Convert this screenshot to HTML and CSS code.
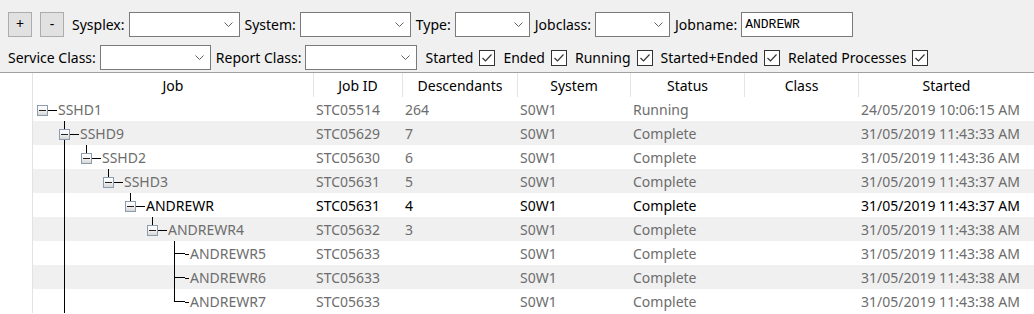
FILE: index.html
```html
<!DOCTYPE html>
<html>
<head>
<meta charset="utf-8">
<link rel="stylesheet" href="styles.css">
</head>
<body>
<div class="toolbar">
  <div class="tb-row">
    <button class="btn">+</button>
    <button class="btn">-</button>
    <span class="lbl first">Sysplex:</span>
    <div class="combo w111"><svg class="chev" width="9" height="5" viewBox="0 0 9 5"><polyline points="0.5,0.5 4.5,4.5 8.5,0.5" fill="none" stroke="#606060" stroke-width="1"/></svg></div>
    <span class="lbl">System:</span>
    <div class="combo w111"><svg class="chev" width="9" height="5" viewBox="0 0 9 5"><polyline points="0.5,0.5 4.5,4.5 8.5,0.5" fill="none" stroke="#606060" stroke-width="1"/></svg></div>
    <span class="lbl">Type:</span>
    <div class="combo w75"><svg class="chev" width="9" height="5" viewBox="0 0 9 5"><polyline points="0.5,0.5 4.5,4.5 8.5,0.5" fill="none" stroke="#606060" stroke-width="1"/></svg></div>
    <span class="lbl">Jobclass:</span>
    <div class="combo w75"><svg class="chev" width="9" height="5" viewBox="0 0 9 5"><polyline points="0.5,0.5 4.5,4.5 8.5,0.5" fill="none" stroke="#606060" stroke-width="1"/></svg></div>
    <span class="lbl">Jobname:</span>
    <div class="textbox">ANDREWR</div>
  </div>
  <div class="tb-row">
    <span class="lbl lead">Service Class:</span>
    <div class="combo w111"><svg class="chev" width="9" height="5" viewBox="0 0 9 5"><polyline points="0.5,0.5 4.5,4.5 8.5,0.5" fill="none" stroke="#606060" stroke-width="1"/></svg></div>
    <span class="lbl">Report Class:</span>
    <div class="combo w112"><svg class="chev" width="9" height="5" viewBox="0 0 9 5"><polyline points="0.5,0.5 4.5,4.5 8.5,0.5" fill="none" stroke="#606060" stroke-width="1"/></svg></div>
    <span class="lbl chk-lbl">Started</span>
    <span class="cb"><svg width="14" height="14" viewBox="0 0 14 14"><polyline points="2.5,7 5.5,10 11.5,3.5" fill="none" stroke="#333" stroke-width="1.2"/></svg></span>
    <span class="lbl chk-lbl">Ended</span>
    <span class="cb"><svg width="14" height="14" viewBox="0 0 14 14"><polyline points="2.5,7 5.5,10 11.5,3.5" fill="none" stroke="#333" stroke-width="1.2"/></svg></span>
    <span class="lbl chk-lbl">Running</span>
    <span class="cb"><svg width="14" height="14" viewBox="0 0 14 14"><polyline points="2.5,7 5.5,10 11.5,3.5" fill="none" stroke="#333" stroke-width="1.2"/></svg></span>
    <span class="lbl chk-lbl">Started+Ended</span>
    <span class="cb"><svg width="14" height="14" viewBox="0 0 14 14"><polyline points="2.5,7 5.5,10 11.5,3.5" fill="none" stroke="#333" stroke-width="1.2"/></svg></span>
    <span class="lbl chk-lbl">Related Processes</span>
    <span class="cb"><svg width="14" height="14" viewBox="0 0 14 14"><polyline points="2.5,7 5.5,10 11.5,3.5" fill="none" stroke="#333" stroke-width="1.2"/></svg></span>
  </div>
</div>

<div class="grid">
  <div class="row head">
    <div class="gutter"></div>
    <div class="hc first-hc">Job</div>
    <div class="hc">Job ID</div>
    <div class="hc">Descendants</div>
    <div class="hc">System</div>
    <div class="hc">Status</div>
    <div class="hc">Class</div>
    <div class="hc">Started</div>
  </div>

  <div class="row">
    <div class="gutter"></div>
    <div class="tree"><span class="col h"><span class="exp"><span class="minus"></span></span></span><span class="stem"></span><span class="name">SSHD1</span></div>
    <div class="c">STC05514</div><div class="c">264</div><div class="c">S0W1</div><div class="c">Running</div><div class="c"></div><div class="c">24/05/2019 10:06:15 AM</div>
  </div>

  <div class="row alt">
    <div class="gutter"></div>
    <div class="tree"><span class="col"></span><span class="col v h"><span class="exp"><span class="minus"></span></span></span><span class="stem"></span><span class="name">SSHD9</span></div>
    <div class="c">STC05629</div><div class="c">7</div><div class="c">S0W1</div><div class="c">Complete</div><div class="c"></div><div class="c">31/05/2019 11:43:33 AM</div>
  </div>

  <div class="row">
    <div class="gutter"></div>
    <div class="tree"><span class="col"></span><span class="col v"></span><span class="col up h"><span class="exp"><span class="minus"></span></span></span><span class="stem"></span><span class="name">SSHD2</span></div>
    <div class="c">STC05630</div><div class="c">6</div><div class="c">S0W1</div><div class="c">Complete</div><div class="c"></div><div class="c">31/05/2019 11:43:36 AM</div>
  </div>

  <div class="row alt">
    <div class="gutter"></div>
    <div class="tree"><span class="col"></span><span class="col v"></span><span class="col"></span><span class="col up h"><span class="exp"><span class="minus"></span></span></span><span class="stem"></span><span class="name">SSHD3</span></div>
    <div class="c">STC05631</div><div class="c">5</div><div class="c">S0W1</div><div class="c">Complete</div><div class="c"></div><div class="c">31/05/2019 11:43:37 AM</div>
  </div>

  <div class="row sel">
    <div class="gutter"></div>
    <div class="tree"><span class="col"></span><span class="col v"></span><span class="col"></span><span class="col"></span><span class="col up h"><span class="exp"><span class="minus"></span></span></span><span class="stem"></span><span class="name">ANDREWR</span></div>
    <div class="c">STC05631</div><div class="c">4</div><div class="c">S0W1</div><div class="c">Complete</div><div class="c"></div><div class="c">31/05/2019 11:43:37 AM</div>
  </div>

  <div class="row alt">
    <div class="gutter"></div>
    <div class="tree"><span class="col"></span><span class="col v"></span><span class="col"></span><span class="col"></span><span class="col"></span><span class="col up h"><span class="exp"><span class="minus"></span></span></span><span class="stem"></span><span class="name">ANDREWR4</span></div>
    <div class="c">STC05632</div><div class="c">3</div><div class="c">S0W1</div><div class="c">Complete</div><div class="c"></div><div class="c">31/05/2019 11:43:38 AM</div>
  </div>

  <div class="row">
    <div class="gutter"></div>
    <div class="tree"><span class="col"></span><span class="col v"></span><span class="col"></span><span class="col"></span><span class="col"></span><span class="col"></span><span class="col v hl"></span><span class="stem"></span><span class="name">ANDREWR5</span></div>
    <div class="c">STC05633</div><div class="c"></div><div class="c">S0W1</div><div class="c">Complete</div><div class="c"></div><div class="c">31/05/2019 11:43:38 AM</div>
  </div>

  <div class="row alt">
    <div class="gutter"></div>
    <div class="tree"><span class="col"></span><span class="col v"></span><span class="col"></span><span class="col"></span><span class="col"></span><span class="col"></span><span class="col v hl"></span><span class="stem"></span><span class="name">ANDREWR6</span></div>
    <div class="c">STC05633</div><div class="c"></div><div class="c">S0W1</div><div class="c">Complete</div><div class="c"></div><div class="c">31/05/2019 11:43:38 AM</div>
  </div>

  <div class="row">
    <div class="gutter"></div>
    <div class="tree"><span class="col"></span><span class="col v"></span><span class="col"></span><span class="col"></span><span class="col"></span><span class="col"></span><span class="col up hl"></span><span class="stem"></span><span class="name">ANDREWR7</span></div>
    <div class="c">STC05633</div><div class="c"></div><div class="c">S0W1</div><div class="c">Complete</div><div class="c"></div><div class="c">31/05/2019 11:43:38 AM</div>
  </div>
</div>
</body>
</html>
```

FILE: styles.css
```css
* { box-sizing: border-box; }

html, body {
  margin: 0;
  padding: 0;
}

body {
  width: 1034px;
  height: 314px;
  overflow: hidden;
  background: #ffffff;
  font-family: "Noto Sans", "Open Sans", sans-serif;
  font-size: 14px;
  color: #000;
}

/* ---------- toolbar ---------- */
.toolbar {
  background: #f0f0f0;
  padding: 12px 0 2px 8px;
  border-bottom: 1px solid #a0a0a0;
  display: flex;
  flex-direction: column;
  gap: 8px;
}

.tb-row {
  display: flex;
  align-items: center;
  height: 25px;
  white-space: nowrap;
}

.btn {
  width: 24px;
  height: 25px;
  margin: 0 8px 0 0;
  padding: 0 0 2px 0;
  border: 1px solid #adadad;
  background: #e1e1e1;
  font-family: inherit;
  font-size: 14px;
  color: #000;
  line-height: 20px;
}

.lbl {
  margin: 0 4px 0 5px;
  line-height: 25px;
}

.lbl.first { margin-left: 0; }
.lbl.lead { margin-left: 0; }
.chk-lbl { margin: 0 6px 0 8px; }

.combo {
  height: 25px;
  background: #fff;
  border: 1px solid #7a7a7a;
  display: flex;
  align-items: center;
  justify-content: flex-end;
  padding-right: 6px;
}

.w111 { width: 111px; }
.w112 { width: 112px; }
.w75 { width: 75px; }

.chev { display: block; }

.textbox {
  width: 112px;
  height: 25px;
  background: #fff;
  border: 1px solid #7a7a7a;
  padding-left: 3px;
  font-family: "Liberation Mono", "DejaVu Sans Mono", monospace;
  font-size: 13px;
  line-height: 23px;
}

.cb {
  width: 16px;
  height: 16px;
  border: 1px solid #333;
  background: #fff;
  display: flex;
  align-items: center;
  justify-content: center;
}

.cb svg { display: block; }

/* ---------- grid ---------- */
.row {
  display: grid;
  grid-template-columns: 33px 280px 89px 115px 113px 114px 114px 176px;
  height: 24px;
  color: #6d6d6d;
}

.row.alt .tree,
.row.alt .c { background: #f0f0f0; }

.row.sel { color: #000; }

.gutter {
  border-right: 1px solid #e3e3e3;
  background: #fff;
}

.head { color: #000; }

.hc {
  text-align: center;
  line-height: 24px;
  padding-top: 1px;
  border-left: 1px solid #e5e5e5;
  white-space: nowrap;
  overflow: hidden;
}

.hc.first-hc { border-left: none; }

.c {
  padding: 1px 0 0 3px;
  line-height: 24px;
  white-space: nowrap;
  overflow: hidden;
}

/* ---------- tree ---------- */
.tree {
  display: flex;
  height: 24px;
  overflow: hidden;
}

.tree > .col:first-child { margin-left: -2px; }

.col {
  flex: none;
  width: 22px;
  height: 24px;
  display: flex;
  align-items: flex-start;
  background-repeat: no-repeat;
}

/* full vertical line */
.col.v {
  background-image: linear-gradient(#000, #000);
  background-position: 11px 0;
  background-size: 1px 24px;
}

/* stub from top to box */
.col.up {
  background-image: linear-gradient(#000, #000);
  background-position: 11px 0;
  background-size: 1px 8px;
}

/* horizontal line from box to right edge */
.col.h {
  background-image: linear-gradient(#000, #000);
  background-position: 17px 13px;
  background-size: 5px 1px;
}

.col.up.h {
  background-image: linear-gradient(#000, #000), linear-gradient(#000, #000);
  background-position: 11px 0, 17px 13px;
  background-size: 1px 8px, 5px 1px;
}

.col.v.h {
  background-image: linear-gradient(#000, #000), linear-gradient(#000, #000);
  background-position: 11px 0, 17px 13px;
  background-size: 1px 24px, 5px 1px;
}

/* leaf: horizontal from centre */
.col.v.hl {
  background-image: linear-gradient(#000, #000), linear-gradient(#000, #000);
  background-position: 11px 0, 11px 12px;
  background-size: 1px 24px, 11px 1px;
}

.col.up.hl {
  background-image: linear-gradient(#000, #000), linear-gradient(#000, #000);
  background-position: 11px 0, 11px 12px;
  background-size: 1px 13px, 11px 1px;
}

.stem {
  flex: none;
  width: 4px;
  height: 24px;
  background: linear-gradient(#000, #000) 0 13px / 4px 1px no-repeat;
}

.exp {
  width: 11px;
  height: 11px;
  margin: 8px 0 0 6px;
  border: 1px solid #8b9bb2;
  background: linear-gradient(#ffffff 0%, #f4f4f4 45%, #d6d6d6 100%);
  display: flex;
  align-items: center;
  justify-content: center;
}

.minus {
  width: 7px;
  height: 1px;
  background: #222;
}

.name {
  margin-left: 1px;
  padding-top: 1px;
  line-height: 24px;
  white-space: nowrap;
}
```
